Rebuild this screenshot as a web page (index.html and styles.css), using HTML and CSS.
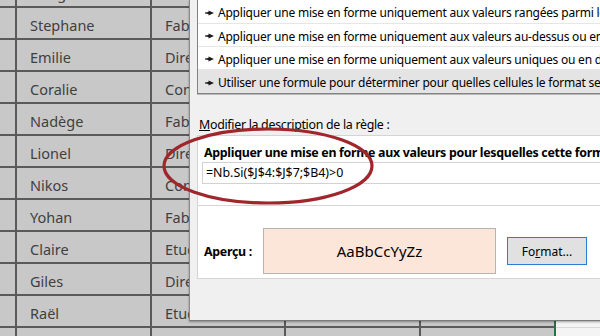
FILE: index.html
```html
<!DOCTYPE html>
<html lang="fr">
<head>
    <meta charset="UTF-8">
    <meta name="viewport" content="width=device-width, initial-scale=1.0">
    <title>Nouvelle règle de mise en forme</title>
    <link rel="stylesheet" href="styles.css">
</head>
<body>
<div class="screen">
    <!-- Feuille Excel en fond -->
    <div class="sheet">
        <div class="row"><div class="cell"></div><div class="cell">Margaux</div><div class="cell"></div><div class="cell"></div><div class="cell"></div><div class="cell blank"></div></div>
        <div class="row"><div class="cell"></div><div class="cell">Stephane</div><div class="cell">Fab</div><div class="cell"></div><div class="cell"></div><div class="cell blank"></div></div>
        <div class="row"><div class="cell"></div><div class="cell">Emilie</div><div class="cell">Dire</div><div class="cell"></div><div class="cell"></div><div class="cell blank"></div></div>
        <div class="row"><div class="cell"></div><div class="cell">Coralie</div><div class="cell">Con</div><div class="cell"></div><div class="cell"></div><div class="cell blank"></div></div>
        <div class="row"><div class="cell"></div><div class="cell">Nadège</div><div class="cell">Fab</div><div class="cell"></div><div class="cell"></div><div class="cell blank"></div></div>
        <div class="row"><div class="cell"></div><div class="cell">Lionel</div><div class="cell">Dire</div><div class="cell"></div><div class="cell"></div><div class="cell blank"></div></div>
        <div class="row"><div class="cell"></div><div class="cell">Nikos</div><div class="cell">Con</div><div class="cell"></div><div class="cell"></div><div class="cell blank"></div></div>
        <div class="row"><div class="cell"></div><div class="cell">Yohan</div><div class="cell">Fab</div><div class="cell"></div><div class="cell"></div><div class="cell blank"></div></div>
        <div class="row"><div class="cell"></div><div class="cell">Claire</div><div class="cell">Etud</div><div class="cell"></div><div class="cell"></div><div class="cell blank"></div></div>
        <div class="row"><div class="cell"></div><div class="cell">Giles</div><div class="cell">Dire</div><div class="cell"></div><div class="cell"></div><div class="cell blank"></div></div>
        <div class="row"><div class="cell"></div><div class="cell">Raël</div><div class="cell">Etud</div><div class="cell"></div><div class="cell"></div><div class="cell blank"></div></div>
        <div class="row"><div class="cell"></div><div class="cell"></div><div class="cell"></div><div class="cell"></div><div class="cell"></div><div class="cell blank"></div></div>
    </div>

    <!-- Boîte de dialogue -->
    <div class="dialog">
        <ul class="rule-list">
            <li><svg class="arrow" width="9" height="6" viewBox="0 0 9 6"><path d="M0 2.4 L3.5 2.1 L3.5 0.6 L9 3 L3.5 5.4 L3.5 3.9 L0 3.6 Z"/></svg>Appliquer une mise en forme uniquement aux valeurs rangées parmi les premières ou les dernières valeurs</li>
            <li><svg class="arrow" width="9" height="6" viewBox="0 0 9 6"><path d="M0 2.4 L3.5 2.1 L3.5 0.6 L9 3 L3.5 5.4 L3.5 3.9 L0 3.6 Z"/></svg>Appliquer une mise en forme uniquement aux valeurs au-dessus ou en dessous de la moyenne</li>
            <li><svg class="arrow" width="9" height="6" viewBox="0 0 9 6"><path d="M0 2.4 L3.5 2.1 L3.5 0.6 L9 3 L3.5 5.4 L3.5 3.9 L0 3.6 Z"/></svg>Appliquer une mise en forme uniquement aux valeurs uniques ou en double</li>
            <li class="selected"><svg class="arrow" width="9" height="6" viewBox="0 0 9 6"><path d="M0 2.4 L3.5 2.1 L3.5 0.6 L9 3 L3.5 5.4 L3.5 3.9 L0 3.6 Z"/></svg>Utiliser une formule pour déterminer pour quelles cellules le format sera appliqué</li>
        </ul>

        <p class="desc-label"><u>M</u>odifier la description de la règle :</p>

        <div class="desc-box">
            <p class="desc-title">Appliquer une mise en forme aux valeurs pour lesquelles cette formule est vraie :</p>
            <div class="formula">=Nb.Si($J$4:$J$7;$B4)&gt;0</div>
            <div class="preview-row">
                <span class="preview-label">Aperçu :</span>
                <div class="preview">AaBbCcYyZz</div>
                <button class="format-btn">Fo<u>r</u>mat...</button>
            </div>
        </div>
    </div>

    <!-- Cercle rouge dessiné à la main -->
    <svg class="marker" width="600" height="336" viewBox="0 0 600 336">
        <ellipse cx="268" cy="166" rx="104" ry="37" fill="none" stroke="#9f272b" stroke-width="3.2"/>
    </svg>
</div>
</body>
</html>
```

FILE: styles.css
```css
/* Fond : la feuille de calcul grisée */
body {
    margin: 0;
    overflow: hidden;
    background-color: #c8c8c8;
}

.screen {
    position: relative;
    width: 600px;
    height: 336px;
    overflow: hidden;
}

.sheet {
    margin-top: -24px;
    font-family: "Noto Sans", sans-serif;
    font-size: 14.5px;
    color: #404040;
}

.row {
    display: grid;
    grid-template-columns: 17px 135px 134px 135px 135px 1fr;
    height: 32px;
    box-sizing: border-box;
    border-bottom: 2px solid #5a5a5a;
}

.cell {
    border-right: 2px solid #5a5a5a;
    padding: 4px 0 0 13px;
    line-height: 26px;
    white-space: nowrap;
    overflow: hidden;
}

.cell:first-child {
    padding-left: 0;
}

.cell:nth-child(5) {
    border-right-color: #217346;  /* bord de la sélection */
}

.cell.blank {
    background-color: #f4f4f4;
    border-right: none;
    margin-bottom: -2px;
    border-bottom: 1px solid #d8d8d8;
}

/* Boîte de dialogue par-dessus la feuille */
.dialog {
    position: absolute;
    left: 189px;
    top: 0;
    width: 460px;
    height: 320px;
    background-color: #f0f0f0;
    border-left: 1px solid #8a8a8a;
    border-bottom: 1px solid #7a7a7a;
    box-shadow: 0 1px 2px rgba(0, 0, 0, 0.35);
    padding-left: 7px;
    font-family: "Noto Sans", sans-serif;
    font-size: 12.4px;
    letter-spacing: -0.3px;
    color: #000;
}

.rule-list {
    list-style: none;
    margin: -1px 0 0 0;
    padding: 0;
    background-color: white;
    border: 1px solid #828282;
    border-right: none;
    box-shadow: 0 1px 0 #b8b8b8;
    font-size: 12px;
    letter-spacing: -0.22px;
}

.rule-list li {
    display: flex;
    align-items: center;
    box-sizing: border-box;
    height: 23px;
    padding: 2px 0 0 7px;
    border-bottom: 1px solid #e6e6e6;
    white-space: nowrap;
    overflow: hidden;
}

.rule-list li:first-child {
    height: 24px;
}

.rule-list li.selected {
    border-bottom: none;
    background-color: #e4e4e4;
}

.arrow {
    fill: #1a1a1a;
    margin-right: 4px;
    flex-shrink: 0;
}

.desc-label {
    margin: 23px 0 0 2px;
    line-height: 16px;
}

.desc-box {
    margin-top: 2px;
    height: 142px;
    background-color: white;
    border: 1px solid #d4d4d4;
    border-right: none;
    padding-left: 4px;
}

.desc-title {
    margin: 9px 0 0 2px;
    line-height: 16px;
    font-weight: bold;
    white-space: nowrap;
    overflow: hidden;
}

.formula {
    margin-top: 1px;
    height: 20px;
    line-height: 20px;
    border: 1px solid #d2d2d2;
    border-right: none;
    padding-left: 3px;
    letter-spacing: 0;
}

.preview-row {
    display: flex;
    align-items: center;
    margin: 21px 0 0 -4px;
    padding: 22px 0 0 6px;
    border-top: 1px solid #d6d6d6;
}

.preview-label {
    width: 59px;
    font-weight: bold;
}

.preview {
    width: 231px;
    height: 44px;
    line-height: 44px;
    text-align: center;
    background-color: #fce5d9;
    border: 1px solid #b4b4b4;
    font-size: 15px;
    letter-spacing: 0;
}

.format-btn {
    margin-left: 11px;
    width: 80px;
    height: 28px;
    background-color: #e1e1e1;
    border: 1px solid #2a7fd4;
    font-family: "Noto Sans", sans-serif;
    font-size: 12px;
    color: #000;
    padding: 0;
}

/* Cercle rouge d'annotation */
.marker {
    position: absolute;
    left: 0;
    top: 0;
    pointer-events: none;
}
```
